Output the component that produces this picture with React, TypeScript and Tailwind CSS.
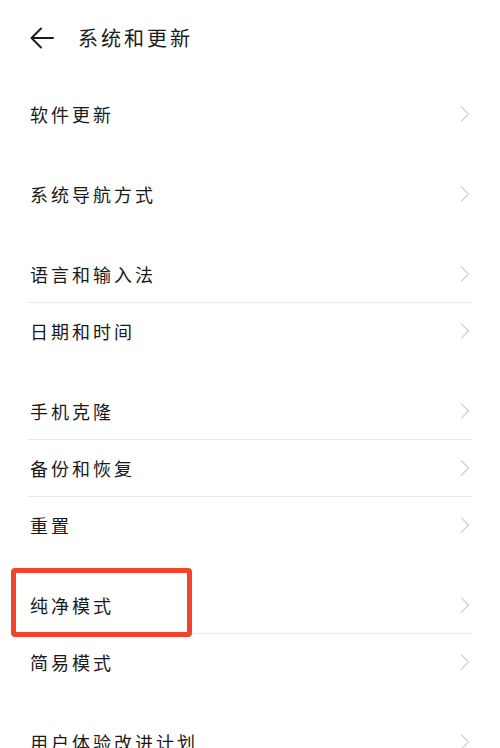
import { ChevronRight } from "lucide-react";

type Row = { label: string; marked?: boolean };

const groups: Row[][] = [
  [{ label: "软件更新" }],
  [{ label: "系统导航方式" }],
  [{ label: "语言和输入法" }, { label: "日期和时间" }],
  [{ label: "手机克隆" }, { label: "备份和恢复" }, { label: "重置" }],
  [{ label: "纯净模式", marked: true }, { label: "简易模式" }],
  [{ label: "用户体验改进计划" }],
];

function BackArrow() {
  return (
    <svg width="24" height="22" viewBox="0 0 24 22" fill="none" aria-hidden="true">
      <path d="M23 11H2M11 1.5L1.5 11l9.5 9.5" stroke="#1a1a1a" strokeWidth="2" strokeLinecap="round" strokeLinejoin="round" />
    </svg>
  );
}

function SettingsRow({ label, marked, divider }: Row & { divider: boolean }) {
  return (
    <div className="relative">
      <div className="flex h-14 items-center justify-between pl-[30px] pr-[21px]">
        <span className="text-[18px] tracking-[3px] text-[#1a1a1a]">{label}</span>
        <ChevronRight className="h-7 w-7 text-[#d2d2d2]" strokeWidth={1.1} aria-hidden="true" />
      </div>
      {divider ? <div className="mx-[28px] h-px bg-[#e9e9e9]" /> : null}
      {marked ? (
        <div className="absolute left-[11px] top-[-9px] h-[69px] w-[181px] rounded-[4px] border-[5px] border-[#f4432a]" />
      ) : null}
    </div>
  );
}

export default function App() {
  return (
    <div
      className="h-[748px] w-[500px] overflow-hidden bg-white"
      style={{ fontFamily: '"Noto Sans CJK SC", "Noto Sans", sans-serif' }}
    >
      <header className="flex h-[62px] items-center pt-[14px] pl-[30px]">
        <BackArrow />
        <h1 className="ml-[24px] text-[20px] font-normal tracking-[3px] text-[#1a1a1a]">系统和更新</h1>
      </header>
      <div className="flex flex-col gap-6 pt-6">
        {groups.map((g, gi) => (
          <div key={gi}>
            {g.map((r, ri) => (
              <SettingsRow key={r.label} {...r} divider={ri < g.length - 1} />
            ))}
          </div>
        ))}
      </div>
    </div>
  );
}
